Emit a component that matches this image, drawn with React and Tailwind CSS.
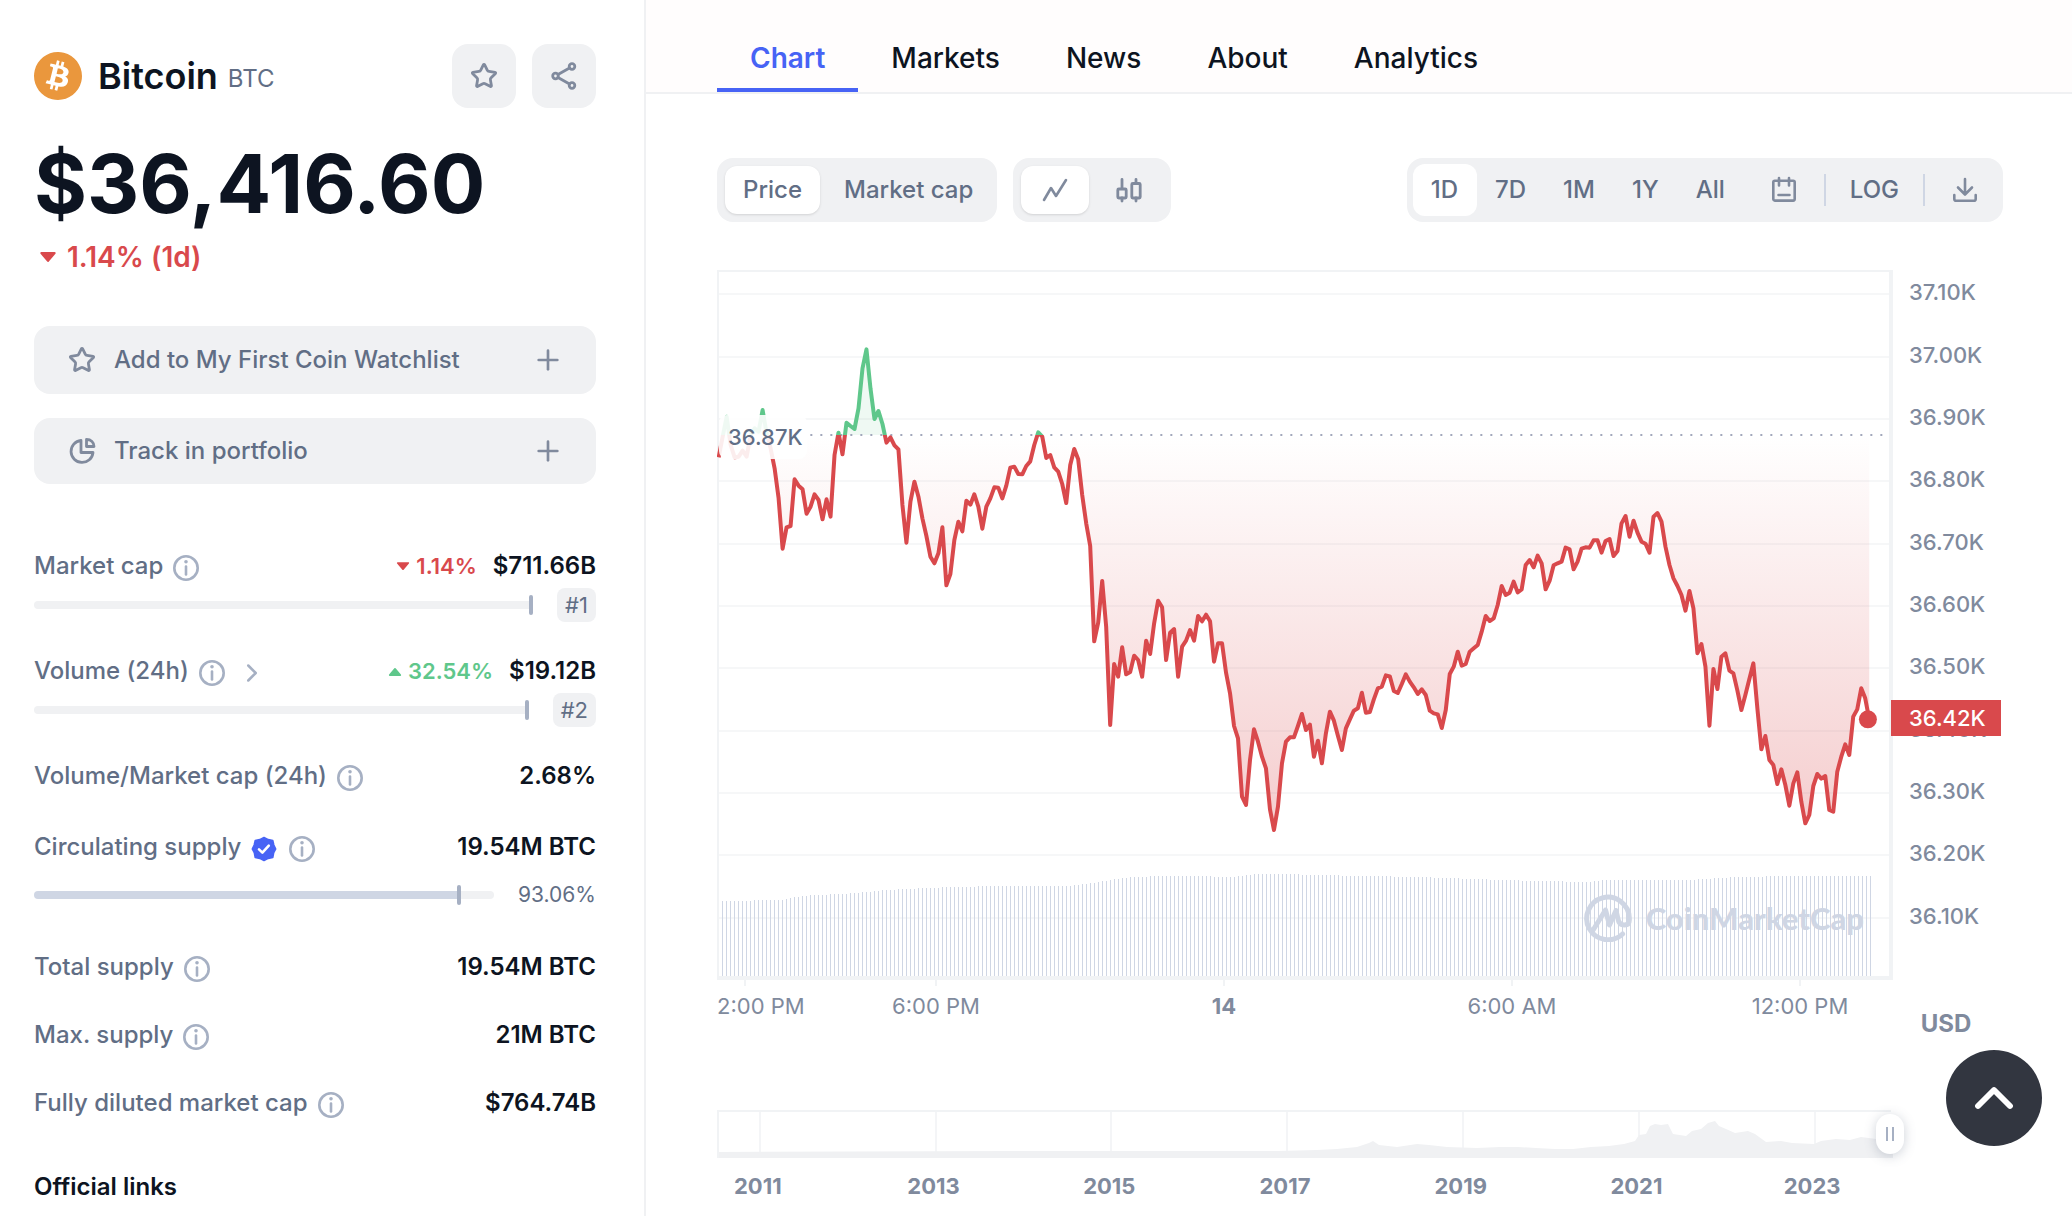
// App.jsx

import React from "react";
import { ChevronRight, ChevronUp, Plus, Star } from "lucide-react";
import { SiBitcoin } from "react-icons/si";

// chart units: three per pixel, measured down from the top of the plot
const BASELINE = 495;
const STEP = 11.985;
const PRICE_POINTS = [
  562, 500, 440, 525, 562, 560, 542, 560, 495, 475, 485, 420, 490, 535, 595,
  685, 836, 772, 768, 628, 647, 658, 731, 710, 673, 690, 748, 688, 740, 555,
  488, 553, 458, 468, 477, 415, 295, 238, 355, 447, 423, 462, 518, 502, 526,
  538, 705, 818, 695, 635, 680, 745, 798, 860, 880, 850, 772, 946, 912, 810,
  755, 784, 692, 704, 673, 710, 776, 710, 685, 652, 653, 685, 647, 593, 590,
  612, 613, 588, 574, 525, 487, 500, 564, 555, 592, 605, 642, 699, 585, 537,
  568, 675, 760, 828, 1114, 1058, 933, 1070, 1365, 1182, 1220, 1132, 1213,
  1206, 1157, 1170, 1220, 1112, 1152, 1060, 992, 1012, 1170, 1088, 1077, 1220,
  1130, 1112, 1080, 1112, 1038, 1054, 1034, 1054, 1175, 1120, 1120, 1208, 1270,
  1368, 1405, 1580, 1605, 1470, 1378, 1415, 1460, 1495, 1618, 1680, 1610, 1480,
  1415, 1402, 1402, 1368, 1332, 1380, 1364, 1460, 1412, 1480, 1390, 1325, 1352,
  1397, 1440, 1375, 1348, 1322, 1315, 1268, 1328, 1326, 1288, 1255, 1250, 1216,
  1219, 1263, 1269, 1242, 1213, 1235, 1252, 1272, 1258, 1275, 1322, 1330, 1333,
  1374, 1320, 1212, 1190, 1145, 1187, 1182, 1145, 1135, 1125, 1085, 1038, 1053,
  1045, 1005, 948, 975, 968, 935, 967, 958, 885, 870, 892, 857, 880, 958, 932,
  886, 880, 875, 833, 838, 898, 875, 836, 832, 833, 811, 811, 848, 813, 807,
  858, 843, 760, 738, 800, 752, 788, 815, 821, 848, 740, 729, 755, 830, 885,
  925, 948, 975, 1022, 963, 1015, 1150, 1122, 1190, 1367, 1197, 1257, 1160,
  1150, 1202, 1210, 1262, 1320, 1275, 1227, 1180, 1315, 1438, 1398, 1470, 1485,
  1542, 1498, 1545, 1607, 1540, 1507, 1595, 1660, 1635, 1548, 1512, 1526, 1518,
  1620, 1625, 1505, 1460, 1423, 1455, 1340, 1318, 1255, 1285, 1348,
];

// [x, top] anchors of the volume bars, in pixels
const VOLUME = [
  [5, 631], [65, 630], [77, 627], [97, 625], [125, 624], [149, 622],
  [169, 620], [209, 618], [236, 617], [281, 616], [352, 616], [369, 614],
  [392, 610], [417, 607], [442, 606], [477, 606], [513, 607], [538, 604],
  [570, 604], [600, 605], [700, 607], [783, 610], [870, 612], [885, 610],
  [970, 610], [1020, 607], [1072, 606], [1153, 606],
];

const HISTORY =
  "0,42 300,41 560,41 600,40 620,39 640,37 652,33 656,31 662,35 680,37 700,34 712,35 730,37 760,38 783,37 801,37 819,38 838,39 856,39 874,37 892,36 907,34 918,31 922,25 929,24 933,16 938,14 944,15 951,14 956,24 969,26 975,21 984,19 991,13 998,11 1002,16 1009,19 1018,23 1031,21 1038,24 1049,32 1064,31 1075,33 1097,34 1104,31 1119,29 1133,30 1144,27 1159,29 1176,30";

const GRID = [24, 87, 149, 211, 274, 336, 398, 461, 523, 585, 648];
const PRICE_LABELS = [
  "37.10K", "37.00K", "36.90K", "36.80K", "36.70K", "36.60K",
  "36.50K", "36.40K", "36.30K", "36.20K", "36.10K",
];
const YEARS = [2011, 2013, 2015, 2017, 2019, 2021, 2023];
const YEAR_LINES = [43, 219, 394, 570, 746, 922, 1098];
const TABS = ["Chart", "Markets", "News", "About", "Analytics"];
const RANGES = ["1D", "7D", "1M", "1Y", "All"];

const volumeTop = (x) => {
  const next = VOLUME.findIndex(([ax]) => ax >= x);
  if (next <= 0) return next === 0 ? VOLUME[0][1] : VOLUME.at(-1)[1];
  const [x0, y0] = VOLUME[next - 1];
  const [x1, y1] = VOLUME[next];
  return Math.round(y0 + ((y1 - y0) * (x - x0)) / (x1 - x0));
};

const linePath = PRICE_POINTS.map(
  (y, i) => `${i ? "L" : "M"}${(5 + i * STEP).toFixed(1)} ${y}`
).join("");
const lastX = 5 + (PRICE_POINTS.length - 1) * STEP;
const areaPath = `${linePath}L${lastX} ${BASELINE}L5 ${BASELINE}Z`;
const volumePath = Array.from({ length: 288 }, (_, i) => {
  const x = 5 + i * 4;
  return `M${x * 3 + 1.5} 2118V${volumeTop(x) * 3}`;
}).join("");

const InfoIcon = () => (
  <svg className="size-[26px] mt-1 text-[#a6b0c3]" viewBox="0 0 26 26" fill="none" stroke="currentColor" aria-hidden="true">
    <circle cx="13" cy="13" r="11.7" strokeWidth="2.6" />
    <path d="M13 11.5v8" strokeWidth="2.6" strokeLinecap="round" />
    <circle cx="13" cy="6.8" r="1.8" fill="currentColor" stroke="none" />
  </svg>
);

const ShareIcon = () => (
  <svg className="size-8" viewBox="0 0 32 32" fill="none" stroke="currentColor" strokeWidth="2.8" strokeLinecap="round" aria-hidden="true">
    <circle cx="7.5" cy="16" r="2.8" />
    <circle cx="24" cy="6.5" r="2.8" />
    <circle cx="24" cy="25.5" r="2.8" />
    <path d="M10 14.5L21.5 8M10 17.5L21.5 24" />
  </svg>
);

const PieIcon = () => (
  <svg className="size-8" viewBox="0 0 32 32" fill="none" stroke="currentColor" strokeWidth="2.8" strokeLinejoin="round" aria-hidden="true">
    <path d="M15 5.5A11 11 0 1 0 27 17.5H15Z" />
    <path d="M20.5 4.5V11.5H28C28 7.5 25 4.5 20.5 4.5Z" />
  </svg>
);

const VerifiedIcon = () => (
  <svg className="size-[26px] mt-1" viewBox="0 0 26 26" aria-hidden="true">
    <path
      d="M13 1.5L17.3 3.6L21.8 4.6L22.8 9L24.7 13L22.6 17L21.8 21.4L17.2 22.4L13 24.5L8.8 22.4L4.2 21.4L3.4 17L1.3 13L3.2 9L4.2 4.6L8.7 3.6Z"
      fill="#4763f5"
      stroke="#4763f5"
      strokeWidth="1.6"
      strokeLinejoin="round"
    />
    <path d="M8 13.4L11.4 16.6L17.8 9.6" fill="none" stroke="#fff" strokeWidth="2.6" strokeLinecap="round" strokeLinejoin="round" />
  </svg>
);

const LineIcon = () => (
  <svg className="size-8" viewBox="0 0 32 32" fill="none" stroke="currentColor" strokeWidth="2.6" strokeLinecap="round" strokeLinejoin="round" aria-hidden="true">
    <path d="M5 26L12 14L17 22L27 6" />
  </svg>
);

const CandleIcon = () => (
  <svg className="size-8" viewBox="0 0 32 32" fill="none" stroke="currentColor" strokeWidth="2.8" strokeLinecap="round" strokeLinejoin="round" aria-hidden="true">
    <path d="M9 5.5V14.5M9 24V27M23 5.5V9M23 24V27" />
    <rect x="4.8" y="15" width="8.4" height="9" rx="1" />
    <rect x="18.8" y="9.5" width="8.4" height="14.5" rx="1" />
  </svg>
);

const CalendarIcon = () => (
  <svg className="size-8" viewBox="0 0 32 32" fill="none" stroke="currentColor" strokeWidth="2.6" strokeLinejoin="round" aria-hidden="true">
    <rect x="5.3" y="6.8" width="21.4" height="19.8" rx="1.5" />
    <path d="M11 4V11.5M21 4V11.5M10.5 21H21.5" strokeLinecap="round" />
  </svg>
);

const DownloadIcon = () => (
  <svg className="size-8" viewBox="0 0 32 32" fill="none" stroke="currentColor" strokeWidth="2.6" strokeLinecap="round" strokeLinejoin="round" aria-hidden="true">
    <path d="M16 5V20M9 13.5L16 20.5L23 13.5M5.3 21V25Q5.3 26.8 7.2 26.8H24.8Q26.7 26.8 26.7 25V21" />
  </svg>
);

const Caret = ({ up, className }) => (
  <svg className={className} viewBox="0 0 16 10" aria-hidden="true">
    <path
      d={up ? "M2 9L8 2L14 9Z" : "M2 1L8 8L14 1Z"}
      fill="currentColor"
      stroke="currentColor"
      strokeWidth="2"
      strokeLinejoin="round"
    />
  </svg>
);

const StatRow = ({ label, value, change, up, verified, more, className }) => (
  <div className={`flex h-8 items-center text-[24px] ${className}`}>
    <span className="font-medium text-[#616e85]">{label}</span>
    <span className="ml-[10px] flex items-center gap-3">
      {verified && <VerifiedIcon />}
      <InfoIcon />
      {more && <ChevronRight className="mt-1 size-[30px] text-[#a6b0c3]" />}
    </span>
    {change && (
      <span
        className={`ml-auto mr-4 flex items-center gap-[6px] text-[22px] font-semibold ${
          up ? "text-[#5fc78b]" : "text-[#d9494c]"
        }`}
      >
        <Caret up={up} className="h-[9px] w-[14px]" />
        {change}
      </span>
    )}
    <span className={`font-semibold text-[#0d1421] ${change ? "" : "ml-auto"}`}>
      {value}
    </span>
  </div>
);

const RankBar = ({ rank }) => (
  <div className="mt-[6px] flex h-[34px] items-center gap-6">
    <div className="flex flex-1 items-center">
      <div className="h-2 flex-1 rounded-l-full bg-[#f0f1f3]" />
      <div className="h-5 w-1 rounded-sm bg-[#a6b0c3]" />
    </div>
    <span className="flex h-[34px] items-center rounded-lg bg-[#f0f1f3] px-2 text-[22px] text-[#616e85]">
      {rank}
    </span>
  </div>
);

const Sidebar = () => (
  <aside className="min-h-screen w-[646px] shrink-0 border-r-2 border-[#f0f1f3] pl-[34px] pr-12 pt-11">
    <div className="flex h-16 items-center">
      <SiBitcoin className="size-12 text-[#ea973d]" />
      <h1 className="ml-4 text-[36px] font-semibold text-[#0d1421]">Bitcoin</h1>
      <span className="ml-[10px] mt-[6px] text-[24px] text-[#616e85]">BTC</span>
      <div className="ml-auto flex gap-4 text-[#808a9d]">
        <button aria-label="Add to watchlist" className="flex size-16 items-center justify-center rounded-2xl bg-[#f0f1f3]">
          <Star className="size-7" strokeWidth={2.4} />
        </button>
        <button aria-label="Share" className="flex size-16 items-center justify-center rounded-2xl bg-[#f0f1f3]">
          <ShareIcon />
        </button>
      </div>
    </div>
    <p className="mt-9 text-[81px] font-bold leading-[80px] text-[#0d1421]">
      $36,416.60
    </p>
    <p className="mt-[17px] flex items-center gap-[10px] pl-[5px] text-[28px] font-semibold leading-8 text-[#d9494c]">
      <Caret className="h-[11px] w-[18px]" />
      1.14% (1d)
    </p>
    <div className="mt-[53px] flex flex-col gap-6 text-[24px] font-medium text-[#616e85]">
      <button className="flex h-[68px] items-center rounded-2xl bg-[#f0f1f3] px-8">
        <span className="flex w-8 justify-center text-[#808a9d]">
          <Star className="size-7" strokeWidth={2.4} />
        </span>
        <span className="ml-4">Add to My First Coin Watchlist</span>
        <Plus className="ml-auto size-8 text-[#808a9d]" />
      </button>
      <button className="flex h-[66px] items-center rounded-2xl bg-[#f0f1f3] px-8">
        <span className="flex w-8 justify-center text-[#808a9d]">
          <PieIcon />
        </span>
        <span className="ml-4">Track in portfolio</span>
        <Plus className="ml-auto size-8 text-[#808a9d]" />
      </button>
    </div>

    <StatRow className="mt-[66px]" label="Market cap" change="1.14%" value="$711.66B" />
    <RankBar rank="#1" />
    <StatRow className="mt-[33px]" label="Volume (24h)" more up change="32.54%" value="$19.12B" />
    <RankBar rank="#2" />
    <StatRow className="mt-[33px]" label="Volume/Market cap (24h)" value="2.68%" />
    <StatRow className="mt-[39px]" label="Circulating supply" verified value="19.54M BTC" />
    <div className="mt-[15px] flex h-[34px] items-center gap-6">
      <div className="flex flex-1 items-center">
        <div className="h-2 w-[92%] rounded-l-full bg-[#cfd6e4]" />
        <div className="h-5 w-1 rounded-sm bg-[#a6b0c3]" />
        <div className="h-2 flex-1 rounded-r-full bg-[#f0f1f3]" />
      </div>
      <span className="text-[21px] text-[#616e85]">93.06%</span>
    </div>
    <StatRow className="mt-[39px]" label="Total supply" value="19.54M BTC" />
    <StatRow className="mt-9" label="Max. supply" value="21M BTC" />
    <StatRow className="mt-9" label="Fully diluted market cap" value="$764.74B" />
    <h2 className="mt-[52px] text-[24px] font-semibold leading-8 text-[#0d1421]">
      Official links
    </h2>
  </aside>
);

const Toolbar = () => (
  <div className="flex h-16 items-stretch gap-4 text-[24px] font-medium text-[#616e85]">
    <div className="flex items-center rounded-2xl bg-[#f0f1f3] p-2">
      <button className="h-12 rounded-xl bg-white px-[18px] shadow-sm">Price</button>
      <button className="h-12 pl-6 pr-4">Market cap</button>
    </div>
    <div className="flex items-center rounded-2xl bg-[#f0f1f3] pl-2 pr-[2px] text-[#808a9d]">
      <button aria-label="Line chart" className="flex h-12 w-[68px] items-center justify-center rounded-xl bg-white shadow-sm">
        <LineIcon />
      </button>
      <button aria-label="Candle chart" className="flex h-12 w-20 items-center justify-center">
        <CandleIcon />
      </button>
    </div>
    <div className="ml-auto flex items-center rounded-2xl bg-[#f0f1f3] p-[6px]">
      {RANGES.map((range, i) => (
        <button
          key={range}
          className={`h-[52px] pl-[18px] pr-[19px] ${i === 0 ? "rounded-xl bg-white" : ""}`}
        >
          {range}
        </button>
      ))}
      <button aria-label="Pick dates" className="px-6 text-[#808a9d]">
        <CalendarIcon />
      </button>
      <div className="h-8 w-[2px] bg-[#cfd6e4]" />
      <button className="px-6">LOG</button>
      <div className="h-8 w-[2px] bg-[#cfd6e4]" />
      <button aria-label="Download" className="pl-6 pr-4 text-[#808a9d]">
        <DownloadIcon />
      </button>
    </div>
  </div>
);

const Watermark = () => (
  <div className="absolute bottom-[34px] right-[25px] flex items-center gap-[14px] text-[#cfd6e4]">
    <svg className="size-12" viewBox="0 0 48 48" fill="none" stroke="currentColor" strokeWidth="5" strokeLinecap="round" strokeLinejoin="round" aria-hidden="true">
      <path d="M38.6 40A21.3 21.3 0 1 1 45.3 24V26Q45.3 31 40.5 31Q35 31 34 25L32 16.5L25.5 31L21.5 16L8.5 37" />
    </svg>
    <span className="font-['Lato'] text-[31px] font-black leading-10">CoinMarketCap</span>
  </div>
);

const PriceChart = () => (
  <div className="relative h-[710px] border-b-4 border-l-2 border-r-4 border-t-2 border-[#f1f3f5]">
    <svg
      className="absolute -left-[2px] -top-[2px] h-[710px] w-[calc(100%+6px)]"
      viewBox="0 0 3528 2130"
      preserveAspectRatio="none"
      role="img"
      aria-label="Bitcoin price, last 24 hours"
    >
      <defs>
        <clipPath id="above">
          <rect x="6" y="0" width="3510" height={BASELINE} />
        </clipPath>
        <clipPath id="below">
          <rect x="0" y={BASELINE} width="3510" height="1620" />
        </clipPath>
        <linearGradient id="loss" gradientUnits="userSpaceOnUse" x1="0" y1={BASELINE} x2="0" y2="1700">
          <stop offset="0" stopColor="#d9494c" stopOpacity="0" />
          <stop offset="1" stopColor="#d9494c" stopOpacity="0.28" />
        </linearGradient>
      </defs>
      {GRID.map((y) => (
        <path key={y} d={`M6 ${y * 3}H3516`} stroke="#f6f7f8" strokeWidth="6" />
      ))}
      <path d={volumePath} stroke="#cfd6e4" strokeWidth="3" />
      <path d={areaPath} fill="#5fc78b" fillOpacity="0.1" clipPath="url(#above)" />
      <path d={areaPath} fill="url(#loss)" clipPath="url(#below)" />
      <path d={`M280 ${BASELINE}H3500`} stroke="#a1a7bb" strokeWidth="6" strokeDasharray="6 24" />
      <path d={linePath} fill="none" stroke="#5fc78b" strokeWidth="12" strokeLinejoin="round" clipPath="url(#above)" />
      <path d={linePath} fill="none" stroke="#d9494c" strokeWidth="12" strokeLinejoin="round" clipPath="url(#below)" />
      <circle cx={lastX - 4} cy="1348" r="27" fill="#d9494c" />
    </svg>
    <span className="absolute left-0 top-[143px] rounded-lg bg-white/90 py-2 pl-[9px] pr-1 text-[22px] font-medium leading-7 text-[#616e85]">
      36.87K
    </span>
    <Watermark />
  </div>
);

const Navigator = () => (
  <div className="relative mt-[90px] h-12">
    <svg className="h-12 w-full" viewBox="0 0 1176 48" preserveAspectRatio="none" role="img" aria-label="Price since 2010">
      {YEAR_LINES.map((x) => (
        <path key={x} d={`M${x} 2V48`} stroke="#f4f5f7" strokeWidth="2" />
      ))}
      <polygon points={`0,48 ${HISTORY} 1176,48`} fill="#f0f1f3" />
      <path d="M1 48V1H1174" fill="none" stroke="#f1f3f5" strokeWidth="2" />
    </svg>
    <button
      aria-label="Move range"
      className="absolute -right-[11px] top-1 flex h-10 w-7 items-center justify-center gap-1 rounded-2xl bg-white shadow-[0_2px_12px_rgba(88,102,126,0.3)]"
    >
      <span className="h-[14px] w-[2px] bg-[#a6b0c3]" />
      <span className="h-[14px] w-[2px] bg-[#a6b0c3]" />
    </button>
  </div>
);

const ChartPanel = () => (
  <section className="pl-[71px] pr-[69px] pt-16">
    <Toolbar />
    <div className="mt-12 flex items-start text-[22px] leading-7 text-[#808a9d]">
      <div className="min-w-0 flex-1">
        <PriceChart />
        <div className="-mr-[51px] grid grid-cols-[minmax(0,75fr)_288fr_288fr_288fr_288fr] whitespace-nowrap text-center">
          <div className="flex flex-col">
            <span className="ml-[27px] h-[6px] w-[2px] bg-[#f1f3f5]" />
            <span className="mt-[6px] text-left">2:00 PM</span>
          </div>
          {["6:00 PM", "14", "6:00 AM", "12:00 PM"].map((time) => (
            <div key={time} className="flex flex-col items-center">
              <span className="h-[6px] w-[2px] bg-[#f1f3f5]" />
              <span className={`mt-[6px] ${time === "14" ? "font-bold" : ""}`}>{time}</span>
            </div>
          ))}
        </div>
        <Navigator />
        <div className="-ml-[47px] -mr-[7px] mt-[14px] grid grid-cols-7 text-center font-bold">
          {YEARS.map((year) => (
            <span key={year}>{year}</span>
          ))}
        </div>
      </div>
      <div className="relative -mt-[9px] w-[110px]">
        <ul className="flex h-[686px] flex-col pl-4 font-medium">
          {PRICE_LABELS.map((price) => (
            <li key={price} className="flex flex-1 items-center">
              {price}
            </li>
          ))}
        </ul>
        <span className="absolute -left-[2px] top-[439px] flex h-9 w-[110px] items-center bg-[#d9494c] pl-[18px] font-medium text-white">
          36.42K
        </span>
        <p className="mr-1 mt-[63px] text-center text-[24px] font-bold leading-7">USD</p>
      </div>
    </div>
  </section>
);

const App = () => {
  return (
    <div className="flex h-screen overflow-hidden bg-white font-['Inter',sans-serif]">
      <Sidebar />
      <main className="min-w-0 flex-1">
        <nav className="flex h-[94px] items-end border-b-2 border-[#f0f1f3] bg-[#fffdfd] pl-[71px] text-[28px] font-medium text-[#0d1421]">
          {TABS.map((tab, i) => (
            <a
              key={tab}
              href="#"
              className={`border-b-4 px-[33px] pb-3 leading-9 ${
                i === 0 ? "border-[#4763f5] font-semibold text-[#4763f5]" : "border-transparent"
              }`}
            >
              {tab}
            </a>
          ))}
        </nav>
        <ChartPanel />
      </main>
      <button
        aria-label="Back to top"
        className="fixed bottom-[70px] right-[30px] flex size-24 items-center justify-center rounded-full bg-[#323640] text-white"
      >
        <ChevronUp className="size-16" strokeWidth={2.2} />
      </button>
    </div>
  );
};

export default App;
